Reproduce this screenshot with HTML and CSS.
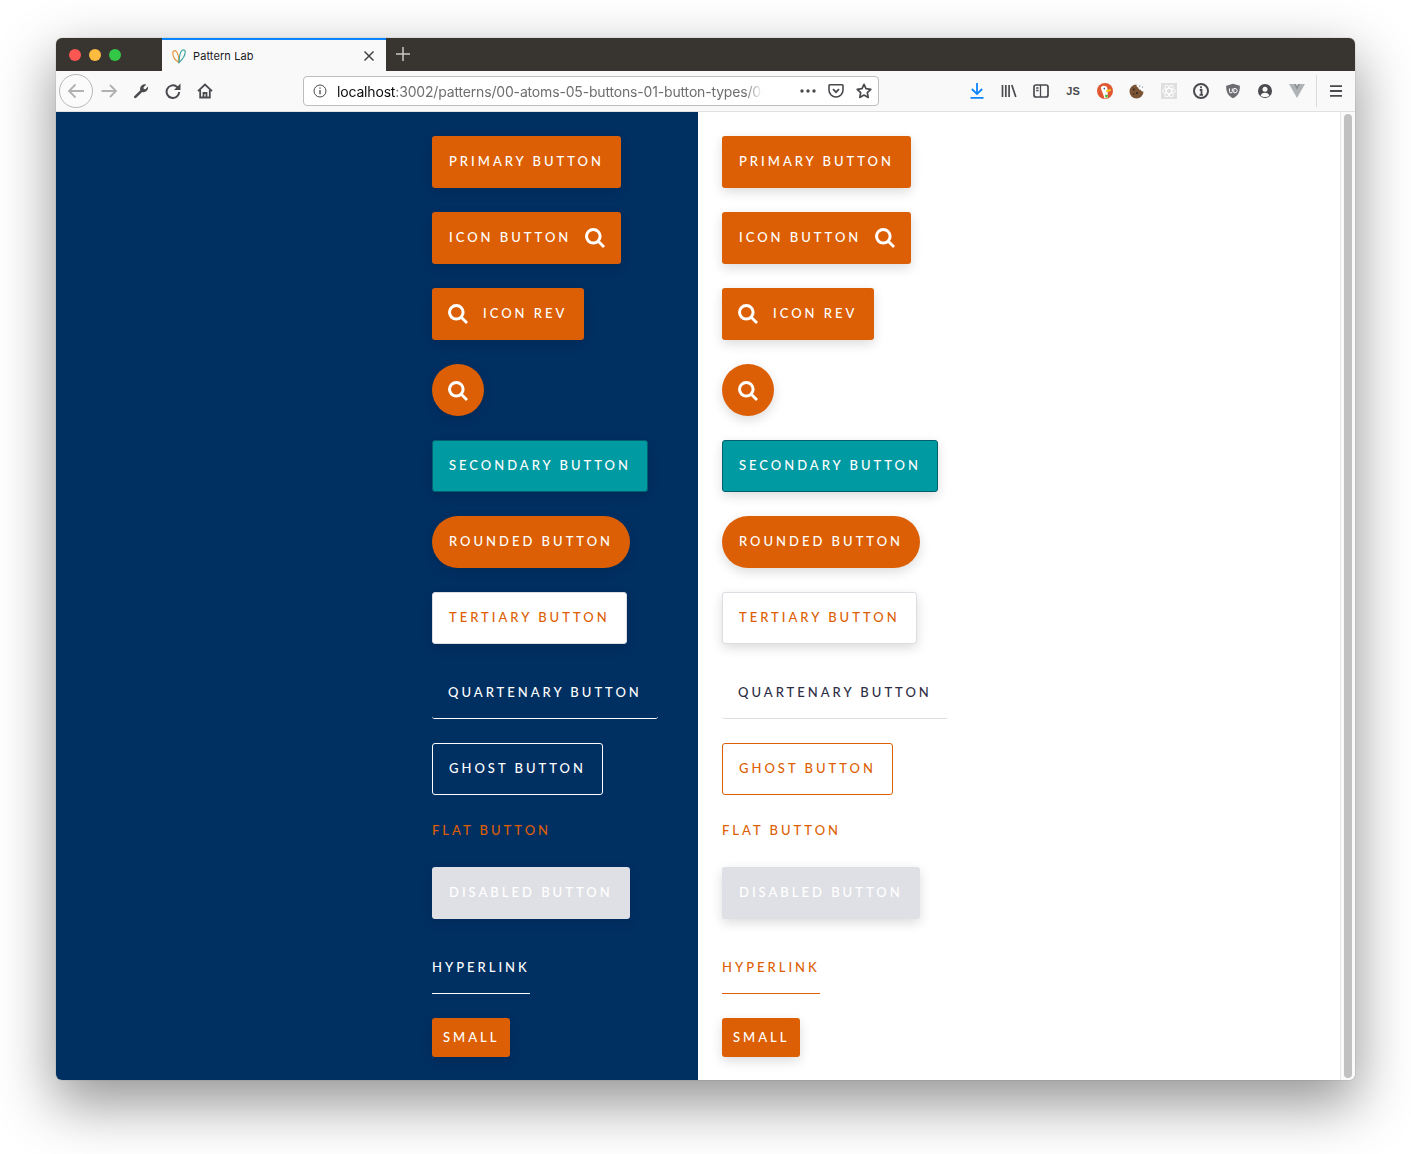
FILE: index.html
```html
<!DOCTYPE html>
<html lang="en">
<head>
<meta charset="utf-8">
<title>Pattern Lab</title>
<link rel="stylesheet" href="styles.css">
</head>
<body>
<svg class="defs" width="0" height="0" aria-hidden="true">
  <symbol id="search" viewBox="0 0 20 20">
    <circle cx="8.300" cy="8.300" r="6.800" fill="none" stroke="currentColor" stroke-width="3"/>
    <path d="M13 13l6 6" fill="none" stroke="currentColor" stroke-width="2.800"/>
  </symbol>
</svg>
<div class="window">
  <header class="titlebar">
    <div class="lights"><i class="light light--red"></i><i class="light light--yellow"></i><i class="light light--green"></i></div>
    <div class="tab">
      <svg class="tab__logo" width="16" height="16" viewBox="0 0 16 16" fill="none" stroke-width="1.200" stroke-linecap="round"><path d="M8 14.500C4.500 12.500 1.800 8.500 1.800 5 1.800 2.800 4 2 5.300 3.400 6.800 5 7.800 9.500 8 14.500Z" stroke="#e8963c"/><path d="M8 14.500C11.500 11.500 14.200 7.500 14.200 3.800 14.200 1.800 12.300 1.300 10.800 2.600 9 4.400 8.200 9.500 8 14.500Z" stroke="#3fa6a0"/></svg>
      <span class="tab__title">Pattern Lab</span>
      <svg class="tab__close" width="12" height="12" viewBox="0 0 12 12"><path d="M1.500 1.500l9 9M10.500 1.500l-9 9" stroke="#444" stroke-width="1.500"/></svg>
    </div>
    <svg class="newtab" width="16" height="16" viewBox="0 0 16 16"><path d="M8 1v14M1 8h14" stroke="#c9c8c6" stroke-width="1.500"/></svg>
  </header>
  <nav class="toolbar">
    <div class="back"><svg width="20" height="20" viewBox="0 0 20 20" fill="none" stroke="#b1b1b3" stroke-width="1.800"><path d="M18 10H3M9.500 3.500L3 10l6.500 6.500"/></svg></div>
    <div class="tool"><svg width="18" height="18" viewBox="0 0 18 18" fill="none" stroke="#b1b1b3" stroke-width="1.800"><path d="M1.500 9h14.500M10 3l6 6-6 6"/></svg></div>
    <div class="tool"><svg width="16" height="16" viewBox="0 0 16 16"><path d="M1 13.600L7.300 7.300C6.500 4.800 8 1.500 11.500 1.200c.7 0 1.300 .1 1.800 .4L10.500 4.300l.3 1.700 1.500 .3 2.700-2.700c.5 2.800-1.300 5.500-4.300 5.600-.6 0-1.100-.1-1.500-.2L2.700 15.200C2 15.800 .4 14.400 1 13.600Z" fill="#4a4a4f"/></svg></div>
    <div class="tool"><svg width="16" height="16" viewBox="0 0 16 16" fill="none" stroke="#4a4a4f" stroke-width="2"><path d="M14.200 9A6.300 6.300 0 1 1 11.500 3.500L14 5.500"/><path d="M15.500 .5v6.500H9Z" stroke="none" fill="#4a4a4f"/></svg></div>
    <div class="tool"><svg width="16" height="16" viewBox="0 0 16 16" fill="none" stroke="#4a4a4f" stroke-width="1.800"><path d="M1 8.200L8 1.500l7 6.700M3.200 7v7.500h9.600V7"/><path d="M6.500 14.500V10h3v4.500"/></svg></div>
    <div class="urlbar">
      <svg class="urlbar__info" width="14" height="14" viewBox="0 0 14 14" fill="none" stroke="#4a4a4f"><circle cx="7" cy="7" r="6"/><path d="M7 6v4.200M7 3.500v1.300" stroke-width="1.300"/></svg>
      <div class="urlbar__text"><span class="urlbar__host">localhost</span>:3002/patterns/00-atoms-05-buttons-01-button-types/00</div>
      <svg class="urlbar__icon urlbar__dots" width="16" height="4" viewBox="0 0 16 4" fill="#4a4a4f"><circle cx="2" cy="2" r="1.700"/><circle cx="8" cy="2" r="1.700"/><circle cx="14" cy="2" r="1.700"/></svg>
      <svg class="urlbar__icon urlbar__pocket" width="16" height="16" viewBox="0 0 16 16" fill="none" stroke="#4a4a4f" stroke-width="1.600"><path d="M1.800 1.800h12.400a.8 .8 0 0 1 .8 .8V7a7 7 0 0 1-14 0V2.600a.8 .8 0 0 1 .8-.8Z"/><path d="M5 6.200l3 3 3-3" stroke-width="1.800"/></svg>
      <svg class="urlbar__icon urlbar__star" width="16" height="16" viewBox="0 0 16 16" fill="none" stroke="#4a4a4f" stroke-width="1.700" stroke-linejoin="round"><path d="M8 1.300l2 4.400 4.800 .6-3.500 3.300 .9 4.800L8 12.100l-4.200 2.300 .9-4.800L1.200 6.300 6 5.700Z"/></svg>
    </div>
    <div class="tools">
      <div class="tool"><svg width="16" height="16" viewBox="0 0 16 16" fill="none" stroke="#0a84ff" stroke-width="1.800"><path d="M8 0v10.500M2.800 6L8 11l5.200-5M1.500 14.800h13"/></svg></div>
      <div class="tool"><svg width="16" height="16" viewBox="0 0 16 16" fill="none" stroke="#4a4a4f" stroke-width="1.700"><path d="M1.500 2v12M4.800 2v12M8.100 2v12M10.800 2l4 12"/></svg></div>
      <div class="tool"><svg width="16" height="16" viewBox="0 0 16 16" fill="none" stroke="#4a4a4f" stroke-width="1.700"><rect x="1" y="2" width="14" height="12" rx="2"/><path d="M7.500 2v12M3.200 5h2.300M3.200 7.500h2.300" stroke-width="1.300"/></svg></div>
      <div class="tool"><span class="js">JS</span></div>
      <div class="tool"><svg width="16" height="16" viewBox="0 0 16 16"><circle cx="8" cy="8" r="8" fill="#de5833"/><path d="M3.800 4.500C5 2.200 9.500 2 10.300 5c.5 2.300 .2 6 .7 9.800L7.500 15.500C6.500 11.500 4.500 8 3.800 4.500Z" fill="#fff"/><path d="M9 7.300l5-1.300-.6 2.300-4.400 .7Z" fill="#fdd20a"/><path d="M8 11.500l3.200 .8-1 2.700-2-1Z" fill="#4cba3c"/><circle cx="7.300" cy="5.600" r=".8" fill="#2d4f8e"/></svg></div>
      <div class="tool"><svg width="16" height="16" viewBox="0 0 16 16"><path d="M7.500 1.500a7 7 0 1 0 7 7c-1.500 .3-2.500-.5-2.700-1.700-1.300 .1-2.500-.8-2.500-2.300C8 4.500 7.200 3 7.500 1.500Z" fill="#7b5335"/><circle cx="4.800" cy="6.500" r="1" fill="#38241a"/><circle cx="8" cy="10" r="1.100" fill="#38241a"/><circle cx="4.800" cy="11" r=".8" fill="#38241a"/><circle cx="10.800" cy="3" r=".6" fill="#4a4a4f"/><circle cx="13.500" cy="4" r=".5" fill="#4a4a4f"/></svg></div>
      <div class="tool"><svg width="16" height="16" viewBox="0 0 16 16" fill="none"><rect width="16" height="16" fill="#dfdfdf"/><g stroke="#fff" stroke-width=".9"><ellipse cx="8" cy="8" rx="6.500" ry="2.500"/><ellipse cx="8" cy="8" rx="6.500" ry="2.500" transform="rotate(60 8 8)"/><ellipse cx="8" cy="8" rx="6.500" ry="2.500" transform="rotate(120 8 8)"/></g></svg></div>
      <div class="tool"><svg width="16" height="16" viewBox="0 0 16 16" fill="none"><circle cx="8" cy="8" r="7" stroke="#4a4a4f" stroke-width="2"/><path d="M8 3.300v1.900M6.700 7h1.800v4.500M6.500 11.800h3.500" stroke="#4a4a4f" stroke-width="1.800"/></svg></div>
      <div class="tool"><svg width="16" height="16" viewBox="0 0 16 16"><path d="M8 .8l6.800 2c.3 5.500-1.500 10-6.800 12.500C2.700 12.800 .9 8.300 1.200 2.800Z" fill="#6d6d72"/><path d="M4.500 5.500v3a1.400 1.400 0 0 0 2.800 0v-3M8.800 5.500h1.200a2 2 0 0 1 0 4.300H8.800Z" fill="none" stroke="#fff" stroke-width="1"/></svg></div>
      <div class="tool"><svg width="16" height="16" viewBox="0 0 16 16"><circle cx="8" cy="8" r="7" fill="#4a4a4f"/><circle cx="8" cy="6.300" r="2.500" fill="#f9f9fa"/><path d="M3.500 12.500c1-2 2.800-2.700 4.500-2.700s3.500 .7 4.500 2.700A6 6 0 0 1 8 14a6 6 0 0 1-4.500-1.500Z" fill="#f9f9fa"/></svg></div>
      <div class="tool"><svg width="16" height="14" viewBox="0 0 16 14"><path d="M0 0h5.500L8 4.500 10.500 0H16L8 14Z" fill="#b0b3b5"/><path d="M5 0h2l1 2 1-2h2L8 6Z" fill="#8d9092"/></svg></div>
      <div class="toolbar__sep"></div>
      <div class="tool"><svg width="14" height="12" viewBox="0 0 14 12" stroke="#4a4a4f" stroke-width="1.800"><path d="M1 1.200h12M1 6h12M1 10.800h12"/></svg></div>
    </div>
  </nav>
  <main class="viewport">
    <section class="panel panel--dark">
      <a class="btn btn--primary">Primary Button</a>
      <a class="btn btn--primary">Icon Button<svg class="btn__icon btn__icon--after"><use href="#search"/></svg></a>
      <a class="btn btn--primary btn--rev"><svg class="btn__icon btn__icon--before"><use href="#search"/></svg>Icon Rev</a>
      <a class="btn btn--primary btn--circle"><svg class="btn__icon"><use href="#search"/></svg></a>
      <a class="btn btn--secondary">Secondary Button</a>
      <a class="btn btn--primary btn--rounded">Rounded Button</a>
      <a class="btn btn--tertiary">Tertiary Button</a>
      <a class="btn btn--quaternary">Quartenary Button</a>
      <a class="btn btn--ghost">Ghost Button</a>
      <a class="btn btn--flat">Flat Button</a>
      <a class="btn btn--disabled">Disabled Button</a>
      <a class="btn btn--link">Hyperlink</a>
      <a class="btn btn--primary btn--small">Small</a>
    </section>
    <section class="panel panel--light">
      <a class="btn btn--primary">Primary Button</a>
      <a class="btn btn--primary">Icon Button<svg class="btn__icon btn__icon--after"><use href="#search"/></svg></a>
      <a class="btn btn--primary btn--rev"><svg class="btn__icon btn__icon--before"><use href="#search"/></svg>Icon Rev</a>
      <a class="btn btn--primary btn--circle"><svg class="btn__icon"><use href="#search"/></svg></a>
      <a class="btn btn--secondary">Secondary Button</a>
      <a class="btn btn--primary btn--rounded">Rounded Button</a>
      <a class="btn btn--tertiary">Tertiary Button</a>
      <a class="btn btn--quaternary">Quartenary Button</a>
      <a class="btn btn--ghost">Ghost Button</a>
      <a class="btn btn--flat">Flat Button</a>
      <a class="btn btn--disabled">Disabled Button</a>
      <a class="btn btn--link">Hyperlink</a>
      <a class="btn btn--primary btn--small">Small</a>
    </section>
    <aside class="scrollbar"><div class="scrollbar__thumb"></div></aside>
  </main>
</div>
</body>
</html>
```
FILE: styles.css
```css
* { box-sizing: border-box; }
html, body { margin: 0; height: 100%; }
body {
  background: #fff;
  padding: 38px 56px 74px;
  overflow: hidden;
  font-family: "Lato", "Liberation Sans", sans-serif;
}
.defs { display: block; height: 0; }

.window {
  height: 1042px;
  display: flex;
  flex-direction: column;
  border-radius: 6px;
  overflow: hidden;
  box-shadow: 0 22px 56px 2px rgba(0, 0, 0, .42), 0 0 1px rgba(0, 0, 0, .5);
}

.titlebar {
  height: 33px;
  flex: none;
  background: #38342f;
  display: flex;
  align-items: stretch;
}
.lights { width: 106px; display: flex; align-items: center; gap: 8px; padding-left: 13px; }
.light { width: 12px; height: 12px; border-radius: 50%; }
.light--red { background: #fc5753; }
.light--yellow { background: #fdbc40; }
.light--green { background: #33c748; }
.tab {
  width: 224px;
  background: #f9f9fa;
  border-top: 2px solid #0a84ff;
  display: flex;
  align-items: center;
  padding: 0 11px 0 9px;
  font-family: "Inter", "Liberation Sans", sans-serif;
  font-size: 11px;
  color: #18181a;
}
.tab__logo { flex: none; }
.tab__title { margin-left: 6px; flex: 1; letter-spacing: .1px; }
.newtab { align-self: center; margin: 0 0 2px 9px; }

.toolbar {
  height: 41px;
  flex: none;
  background: #f9f9fa;
  border-bottom: 1px solid #e1e1e2;
  display: flex;
  align-items: center;
  padding-left: 3px;
}
.back {
  width: 34px;
  height: 34px;
  border: 1px solid #b8b8ba;
  border-radius: 50%;
  background: #fbfbfb;
  display: flex;
  align-items: center;
  justify-content: center;
  flex: none;
}
.tool {
  width: 32px;
  height: 32px;
  flex: none;
  display: flex;
  align-items: center;
  justify-content: center;
}
.urlbar {
  margin-left: 82px;
  width: 576px;
  height: 30px;
  flex: none;
  background: #fff;
  border: 1px solid #bdbdbf;
  border-radius: 4px;
  display: flex;
  align-items: center;
  padding-left: 9px;
}
.urlbar__info { flex: none; }
.urlbar__text {
  margin-left: 10px;
  width: 427px;
  overflow: hidden;
  white-space: nowrap;
  font-family: "Inter", "Liberation Sans", sans-serif;
  font-size: 14px;
  letter-spacing: -.17px;
  color: #6e6e70;
  -webkit-mask-image: linear-gradient(to right, #000 408px, transparent 426px);
  mask-image: linear-gradient(to right, #000 408px, transparent 426px);
}
.urlbar__host { color: #0c0c0d; }
.urlbar__icon { flex: none; }
.urlbar__dots { margin-left: 36px; }
.urlbar__pocket { margin-left: 12px; }
.urlbar__star { margin-left: 12px; }
.tools { margin-left: 82px; display: flex; align-items: center; }
.toolbar__sep { width: 1px; height: 32px; background: #dcdcdd; margin: 0 3px 0 3px; flex: none; }
.js { font: 700 11px "Liberation Sans", sans-serif; color: #4a4a4f; }

.viewport { flex: 1; display: flex; min-height: 0; }
.panel {
  display: flex;
  flex-direction: column;
  align-items: flex-start;
  padding-top: 24px;
  gap: 24px;
}
.panel--dark { width: 642px; background: #002f62; padding-left: 376px; }
.panel--light { flex: 1; background: #fff; padding-left: 24px; }
.scrollbar {
  width: 15px;
  flex: none;
  background: #fafafa;
  border-left: 1px solid #e8e8e8;
  padding: 2px 3px;
}
.scrollbar__thumb { height: 100%; background: #c1c1c1; border-radius: 5px; }

.btn {
  height: 52px;
  padding: 0 17px 2px;
  display: inline-flex;
  align-items: center;
  border-radius: 3px;
  font-size: 13px;
  font-weight: 500;
  letter-spacing: 3px;
  text-transform: uppercase;
  white-space: nowrap;
  color: #fff;
}
.panel--light .btn:not(.btn--flat):not(.btn--quaternary):not(.btn--ghost):not(.btn--link) { box-shadow: 0 4px 12px rgba(0, 0, 0, .14); }
.panel--dark .btn:not(.btn--flat):not(.btn--quaternary):not(.btn--ghost):not(.btn--link) { box-shadow: 0 4px 12px rgba(0, 0, 0, .1); }
.btn__icon { width: 20px; height: 20px; flex: none; color: #fff; position: relative; top: 1px; }
.btn__icon--after { margin-left: 14px; margin-right: -1px; }
.btn__icon--before { margin-left: -1px; margin-right: 15px; }
.btn--primary { background: #dc5f05; }
.btn--circle { width: 52px; padding: 0; justify-content: center; border-radius: 50%; }
.btn--secondary { background: #009aa3; border: 1px solid #00616d; padding: 0 16px 2px; }
.btn--rounded { border-radius: 26px; }
.btn--tertiary { background: #fff; border: 1px solid #dcdde3; color: #dc5f05; padding: 0 16px 2px; }
.btn--quaternary { height: 51px; padding: 0 16px 2px; border-bottom: 1px solid #dcdde3; }
.panel--dark .btn--quaternary { border-bottom-color: #fff; }
.panel--light .btn--quaternary { color: #2d2d45; }
.btn--ghost { background: none; border: 1px solid #fff; padding: 0 16px 2px; }
.panel--light .btn--ghost { border-color: #dc5f05; color: #dc5f05; }
.btn--flat { height: 24px; padding: 0 0 2px; color: #dc5f05; }
.btn--disabled { background: #dfe0e5; }
.btn--link { height: 51px; padding: 0 0 2px; border-bottom: 1px solid #fff; border-radius: 0; }
.panel--light .btn--link { color: #dc5f05; border-bottom-color: #dc5f05; }
.btn--small { height: 39px; padding: 0 11px 2px; }
```
